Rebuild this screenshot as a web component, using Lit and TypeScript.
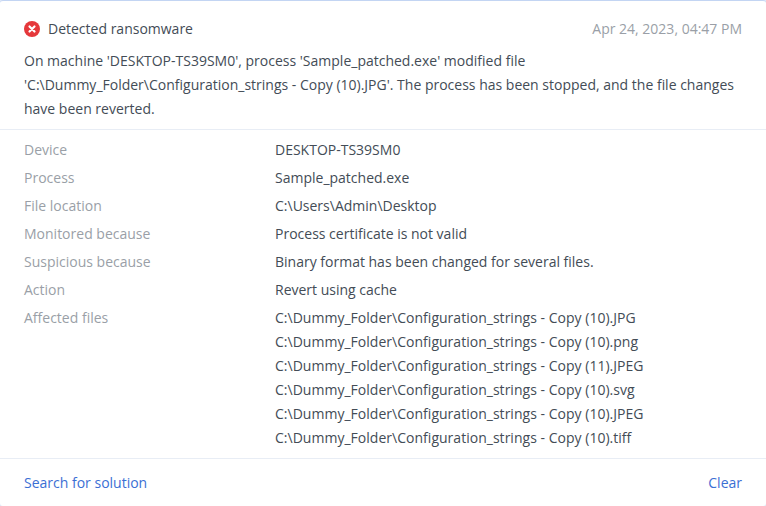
import { LitElement, html, css } from "lit";
import { customElement } from "lit/decorators.js";

const rows: [string, string[], boolean][] = [
  ["Device", ["DESKTOP-TS39SM0"], false],
  ["Process", ["Sample_patched.exe"], false],
  ["File location", ["C:\\Users\\Admin\\Desktop"], false],
  ["Monitored because", ["Process certificate is not valid"], false],
  ["Suspicious because", ["Binary format has been changed for several files."], false],
  ["Action", ["Revert using cache"], false],
  [
    "Affected files",
    [
      "C:\\Dummy_Folder\\Configuration_strings - Copy (10).JPG",
      "C:\\Dummy_Folder\\Configuration_strings - Copy (10).png",
      "C:\\Dummy_Folder\\Configuration_strings - Copy (11).JPEG",
      "C:\\Dummy_Folder\\Configuration_strings - Copy (10).svg",
      "C:\\Dummy_Folder\\Configuration_strings - Copy (10).JPEG",
      "C:\\Dummy_Folder\\Configuration_strings - Copy (10).tiff",
    ],
    true,
  ],
];

@customElement("app-root")
export class AppRoot extends LitElement {
  static styles = css`
    :host {
      display: block;
      width: 766px;
      height: 506px;
      background: #dfe8f7;
      font-family: "Open Sans", sans-serif;
      font-size: 14px;
      line-height: 24px;
      color: #434c56;
    }
    .card {
      box-sizing: border-box;
      height: 506px;
      display: flex;
      flex-direction: column;
      background: #fff;
      border-top: 1px solid #c3d5f3;
      border-radius: 3px;
    }
    .top {
      padding: 16px 24px 0;
      border-bottom: 1px solid #e8edf5;
      height: 112px;
    }
    .head {
      display: flex;
      align-items: center;
      justify-content: space-between;
      height: 24px;
      margin-bottom: 8px;
    }
    .title {
      display: flex;
      align-items: center;
      gap: 8px;
    }
    .title svg {
      display: block;
    }
    .date {
      color: #9a9fa7;
    }
    .msg {
      margin: 0;
    }
    .rows {
      flex: 1;
      padding: 8px 24px 0;
      display: grid;
      grid-template-columns: 251px 1fr;
      grid-auto-rows: min-content;
      row-gap: 4px;
    }
    .label {
      color: #9a9fa7;
    }
    .file {
      letter-spacing: 0.02px;
    }
    .foot {
      display: flex;
      justify-content: space-between;
      align-items: center;
      height: 47px;
      padding: 0 24px;
      border-top: 1px solid #e8edf5;
      color: #3b6fd4;
    }
  `;

  render() {
    return html`<div class="card">
      <div class="top">
        <div class="head">
          <div class="title">
            <svg width="16" height="16" viewBox="0 0 16 16">
              <circle cx="8" cy="8" r="8" fill="#e5383b"></circle>
              <path d="M5.5 5.5l5 5M10.5 5.5l-5 5" stroke="#fff" stroke-width="2.2" stroke-linecap="round"></path>
            </svg>
            <span>Detected ransomware</span>
          </div>
          <span class="date">Apr 24, 2023, 04:47 PM</span>
        </div>
        <p class="msg">
          On machine 'DESKTOP-TS39SM0', process 'Sample_patched.exe' modified file<br />'C:\\Dummy_Folder\\Configuration_strings - Copy (10).JPG'. The process has been stopped, and the file changes<br />have been reverted.
        </p>
      </div>
      <div class="rows">
        ${rows.map(
          ([k, vals, isFile]) => html`<div class="label">${k}</div>
            <div>${vals.map((v) => html`<div class=${isFile ? "file" : ""}>${v}</div>`)}</div>`
        )}
      </div>
      <div class="foot"><span>Search for solution</span><span>Clear</span></div>
    </div>`;
  }
}
